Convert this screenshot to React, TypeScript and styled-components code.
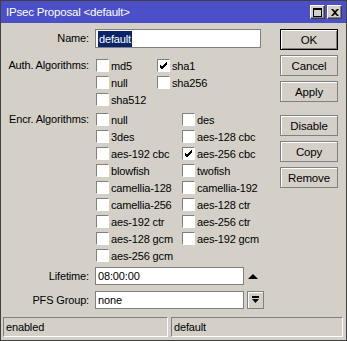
import React from "react";
import styled, { createGlobalStyle, css } from "styled-components";

const Global = createGlobalStyle`
  html, body { margin: 0; padding: 0; background: #d4d0c8; }
  body { font-family: "Liberation Sans", Arial, sans-serif; font-size: 11px; letter-spacing: -0.15px; color: #000; }
  * { box-sizing: border-box; }
`;

const Window = styled.div`
  width: 347px;
  height: 341px;
  border: 1px solid #404040;
  background: #d4d0c8;
  display: flex;
  flex-direction: column;
`;

const TitleBar = styled.div`
  height: 22px;
  background: #4b50c8;
  color: #fff;
  display: flex;
  align-items: center;
  padding: 0 4px 0 5px;
  font-size: 11.5px;
  letter-spacing: -0.2px;
`;

const TitleText = styled.div`
  flex: 1;
`;

const TitleButtons = styled.div`
  display: flex;
  gap: 2px;
`;

const TitleButton = styled.div`
  width: 15px;
  height: 14px;
  background: #d4d0c8;
  border: 1px solid;
  border-color: #fff #404040 #404040 #fff;
  box-shadow: inset -1px -1px #808080;
  display: flex;
  align-items: center;
  justify-content: center;
`;

const Body = styled.div`
  flex: 1;
  display: flex;
  padding-top: 6px;
`;

const Form = styled.div`
  width: 278px;
  display: flex;
  flex-direction: column;
`;

const Row = styled.div<{ $mt?: number }>`
  display: grid;
  grid-template-columns: 88px 1fr;
  column-gap: 6px;
  margin-top: ${(p) => p.$mt ?? 0}px;
`;

const Label = styled.div<{ $h: number }>`
  text-align: right;
  line-height: ${(p) => p.$h}px;
`;

const Field = styled.div`
  display: flex;
  align-items: center;
  gap: 3px;
`;

const Input = styled.div<{ $w: number; $h: number }>`
  width: ${(p) => p.$w}px;
  height: ${(p) => p.$h}px;
  background: #fff;
  border: 1px solid #808080;
  display: flex;
  align-items: center;
  padding-left: 2px;
`;

const Selected = styled.span`
  background: #0a246a;
  color: #fff;
  padding: 1px 1px;
  line-height: 14px;
`;

const CheckGrid = styled.div<{ $col: number }>`
  display: grid;
  grid-template-columns: ${(p) => p.$col}px ${(p) => p.$col}px;
  grid-auto-rows: 17px;
  padding-left: 1px;
`;

const CheckItem = styled.div`
  display: flex;
  align-items: center;
  gap: 2px;
  white-space: nowrap;
`;

const Box = styled.div`
  width: 13px;
  height: 13px;
  background: #fff;
  border: 1px solid;
  border-color: #808080 #fff #fff #808080;
  display: flex;
  align-items: center;
  justify-content: center;
`;

const UpArrow = styled.div`
  width: 0;
  height: 0;
  border-left: 5px solid transparent;
  border-right: 5px solid transparent;
  border-bottom: 5px solid #000;
  margin-left: 1px;
`;

const DropButton = styled.div`
  width: 17px;
  height: 18px;
  background: #d4d0c8;
  border: 1px solid #808080;
  box-shadow: inset 1px 1px #fff;
  display: flex;
  align-items: center;
  justify-content: center;
`;

const Buttons = styled.div`
  width: 58px;
  margin-left: 1px;
  display: flex;
  flex-direction: column;
  gap: 5px;
`;

const Button = styled.div<{ $default?: boolean; $mt?: number }>`
  height: 21px;
  display: flex;
  align-items: center;
  justify-content: center;
  font-size: 11.5px;
  border: 1px solid #808080;
  box-shadow: inset 1px 1px #fff;
  margin-top: ${(p) => p.$mt ?? 0}px;
  ${(p) =>
    p.$default &&
    css`
      border-color: #000;
      box-shadow: inset 1px 1px #fff, inset -1px -1px #808080;
    `}
`;

const StatusBar = styled.div`
  display: flex;
  gap: 3px;
  padding: 0 3px 3px 2px;
`;

const Panel = styled.div<{ $w?: number }>`
  height: 20px;
  ${(p) => (p.$w ? css`flex: 0 0 ${p.$w}px;` : css`flex: 1;`)}
  border: 1px solid;
  border-color: #808080 #fff #fff #808080;
  display: flex;
  align-items: center;
  padding-left: 2px;
`;

const Check = () => (
  <svg width="9" height="9" viewBox="0 0 9 9">
    <path d="M1 4 L3 6 L8 1 M1 5 L3 7 L8 2 M1 6 L3 8 L8 3" stroke="#000" strokeWidth="1" fill="none" shapeRendering="crispEdges" />
  </svg>
);

type Item = { name: string; checked?: boolean };

const CheckBox = ({ item }: { item: Item }) => (
  <CheckItem>
    <Box>{item.checked && <Check />}</Box>
    <span>{item.name}</span>
  </CheckItem>
);

const auth: Item[] = [
  { name: "md5" },
  { name: "sha1", checked: true },
  { name: "null" },
  { name: "sha256" },
  { name: "sha512" },
];

const encr: Item[] = [
  { name: "null" },
  { name: "des" },
  { name: "3des" },
  { name: "aes-128 cbc" },
  { name: "aes-192 cbc" },
  { name: "aes-256 cbc", checked: true },
  { name: "blowfish" },
  { name: "twofish" },
  { name: "camellia-128" },
  { name: "camellia-192" },
  { name: "camellia-256" },
  { name: "aes-128 ctr" },
  { name: "aes-192 ctr" },
  { name: "aes-256 ctr" },
  { name: "aes-128 gcm" },
  { name: "aes-192 gcm" },
  { name: "aes-256 gcm" },
];

export default function App() {
  return (
    <>
      <Global />
      <Window>
        <TitleBar>
          <TitleText>IPsec Proposal &lt;default&gt;</TitleText>
          <TitleButtons>
            <TitleButton>
              <svg width="9" height="9" viewBox="0 0 9 9">
                <rect x="0.5" y="0.5" width="8" height="8" fill="none" stroke="#000" />
                <rect x="0" y="0" width="9" height="2" fill="#000" />
              </svg>
            </TitleButton>
            <TitleButton>
              <svg width="8" height="7" viewBox="0 0 8 7">
                <path d="M0 0h2l2 2 2-2h2L5 3.5 8 7H6L4 5 2 7H0l3-3.5z" fill="#000" />
              </svg>
            </TitleButton>
          </TitleButtons>
        </TitleBar>
        <Body>
          <Form>
            <Row>
              <Label $h={19}>Name:</Label>
              <Field>
                <Input $w={166} $h={19}>
                  <Selected>default</Selected>
                </Input>
              </Field>
            </Row>
            <Row $mt={9}>
              <Label $h={17}>Auth. Algorithms:</Label>
              <CheckGrid $col={61}>
                {auth.map((a, i) => (
                  <CheckBox key={i} item={a} />
                ))}
              </CheckGrid>
            </Row>
            <Row $mt={3}>
              <Label $h={17}>Encr. Algorithms:</Label>
              <CheckGrid $col={86}>
                {encr.map((a, i) => (
                  <CheckBox key={i} item={a} />
                ))}
              </CheckGrid>
            </Row>
            <Row $mt={3}>
              <Label $h={18}>Lifetime:</Label>
              <Field>
                <Input $w={149} $h={18}>08:00:00</Input>
                <UpArrow />
              </Field>
            </Row>
            <Row $mt={6}>
              <Label $h={18}>PFS Group:</Label>
              <Field>
                <Input $w={149} $h={18}>none</Input>
                <DropButton>
                  <svg width="9" height="9" viewBox="0 0 9 9">
                    <rect x="1" y="0" width="7" height="2" fill="#000" />
                    <path d="M1 3h7L4.5 7z" fill="#000" />
                  </svg>
                </DropButton>
              </Field>
            </Row>
          </Form>
          <Buttons>
            <Button $default>OK</Button>
            <Button>Cancel</Button>
            <Button>Apply</Button>
            <Button $mt={8}>Disable</Button>
            <Button>Copy</Button>
            <Button>Remove</Button>
          </Buttons>
        </Body>
        <StatusBar>
          <Panel $w={165}>enabled</Panel>
          <Panel>default</Panel>
        </StatusBar>
      </Window>
    </>
  );
}
